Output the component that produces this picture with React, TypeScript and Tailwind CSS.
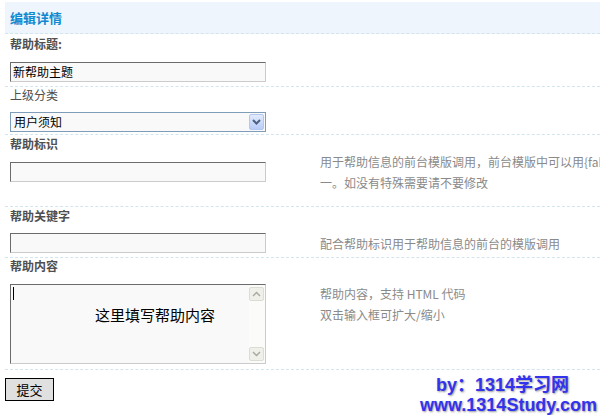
import React from "react";

const font = { fontFamily: '"Noto Sans CJK SC", "Liberation Sans", sans-serif' };

function TextInput({ value }: { value?: string }) {
  return (
    <div className="h-[20px] w-[256px] border border-t-[#6b6b6b] border-l-[#6b6b6b] border-b-[#cbcbcb] border-r-[#cbcbcb] bg-[#f9f9f9] pl-[2px] text-[12px] leading-[18px] text-black">
      {value}
    </div>
  );
}

function Label({ children, bold = true }: { children: React.ReactNode; bold?: boolean }) {
  return (
    <div className={`h-[16px] pl-[5px] text-[12px] leading-[16px] text-[#4f4f4f] ${bold ? "font-bold" : "font-normal"}`}>
      {children}
    </div>
  );
}

function Chevron({ up }: { up?: boolean }) {
  return (
    <svg width="9" height="6" viewBox="0 0 9 6">
      <path d={up ? "M1 5 L4.5 1.5 L8 5" : "M1 1 L4.5 4.5 L8 1"} fill="none" stroke="#a7a79c" strokeWidth="1.4" />
    </svg>
  );
}

export default function App() {
  return (
    <div className="relative h-[415px] w-[600px] overflow-hidden bg-white" style={font}>
      <div className="pl-[5px] pt-[2px]">
        {/* header */}
        <div className="flex h-[32px] items-center border-b border-dashed border-[#d2e5ef] bg-[#eef5fd] pl-[5px]">
          <span className="text-[13px] font-bold leading-[16px] text-[#1189cf]">编辑详情</span>
        </div>

        {/* section 1 */}
        <div className="border-b border-dashed border-[#d2e5ef] pb-[4px] pt-[2px]">
          <Label>帮助标题:</Label>
          <div className="mt-[10px] pl-[5px]">
            <TextInput value="新帮助主题" />
          </div>
        </div>

        {/* section 2 */}
        <div className="border-b border-dashed border-[#d2e5ef] pb-[2px]">
          <Label bold={false}>上级分类</Label>
          <div className="mt-[9px] pl-[5px]">
            <div className="flex h-[20px] w-[256px] items-center justify-between border border-[#7f9db9] bg-[#f9f9f9] pl-[3px] text-[12px] leading-[18px] text-black">
              <span>用户须知</span>
              <div className="mr-[1px] flex h-[16px] w-[15px] items-center justify-center rounded-[2px] border border-[#b3c6ef] bg-gradient-to-b from-[#e2ebfd] to-[#b8ccf7]">
                <svg width="9" height="6" viewBox="0 0 9 6">
                  <path d="M1 1 L4.5 4.5 L8 1" fill="none" stroke="#4d6185" strokeWidth="2" />
                </svg>
              </div>
            </div>
          </div>
        </div>

        {/* section 3 */}
        <div className="border-b border-dashed border-[#d2e5ef] pb-[24px] pt-[1px]">
          <Label>帮助标识</Label>
          <div className="mt-[10px] flex h-[20px] items-center pl-[5px]">
            <div className="w-[310px] shrink-0">
              <TextInput />
            </div>
            <div className="whitespace-nowrap text-[12px] leading-[21px] text-[#8a8a8a]">
              用于帮助信息的前台模版调用，前台模版中可以用{"{fahelp id=xxx}"}调用，每个帮助的标识必须唯
              <br />
              一。如没有特殊需要请不要修改
            </div>
          </div>
        </div>

        {/* section 4 */}
        <div className="border-b border-dashed border-[#d2e5ef] pb-[4px] pt-[1px]">
          <Label>帮助关键字</Label>
          <div className="mt-[9px] flex h-[20px] items-center pl-[5px]">
            <div className="w-[310px] shrink-0">
              <TextInput />
            </div>
            <div className="whitespace-nowrap text-[12px] leading-[21px] text-[#8a8a8a]">
              配合帮助标识用于帮助信息的前台的模版调用
            </div>
          </div>
        </div>

        {/* section 5 */}
        <div className="border-b border-dashed border-[#d2e5ef] pb-[5px]">
          <Label>帮助内容</Label>
          <div className="mt-[10px] flex items-start pl-[5px]">
            <div className="w-[310px] shrink-0">
              <div className="relative flex h-[80px] w-[256px] border border-t-[#6b6b6b] border-l-[#6b6b6b] border-b-[#cbcbcb] border-r-[#cbcbcb] bg-[#f9f9f9]">
                <div className="relative flex-1">
                  <span className="absolute left-[2px] top-[2px] h-[13px] w-[1px] bg-black" />
                  <div className="pl-[84px] pt-[22px] text-[15px] leading-[16px] text-black">这里填写帮助内容</div>
                </div>
                <div className="flex w-[16px] flex-col justify-between bg-[#fbfbf9] py-[2px]">
                  <div className="flex h-[14px] w-[15px] items-center justify-center rounded-[2px] border border-[#dcdcd4] bg-[#f0f0ea]">
                    <Chevron up />
                  </div>
                  <div className="flex h-[14px] w-[15px] items-center justify-center rounded-[2px] border border-[#dcdcd4] bg-[#f0f0ea]">
                    <Chevron />
                  </div>
                </div>
              </div>
            </div>
            <div className="-mt-[1px] whitespace-nowrap text-[12px] leading-[21px] text-[#8a8a8a]">
              帮助内容，支持 HTML 代码
              <br />
              双击输入框可扩大/缩小
            </div>
          </div>
        </div>

        {/* submit */}
        <div className="mt-[8px]">
          <button className="flex h-[23px] w-[49px] items-center justify-center border border-black bg-[#e0e0e0] text-[13px] leading-[16px] text-black">
            提交
          </button>
        </div>
      </div>

      {/* watermark */}
      <div
        className="absolute left-[420px] top-[375px] text-[18px] font-bold leading-[20px] text-[#3333ee] [text-shadow:1px_1px_2px_#9a9a9a]"
        style={{ fontFamily: '"Liberation Sans", "Noto Sans CJK SC", sans-serif' }}
      >
        <div className="whitespace-nowrap pl-[16px]">by：1314学习网</div>
        <div className="whitespace-nowrap">www.1314Study.com</div>
      </div>
    </div>
  );
}
